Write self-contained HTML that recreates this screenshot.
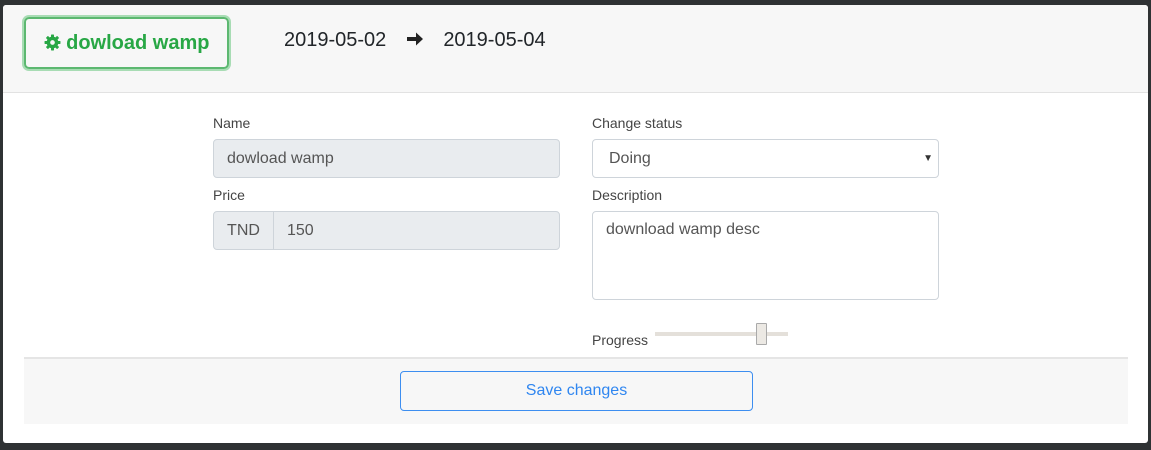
<!DOCTYPE html>
<html><head><meta charset="utf-8"><style>
body{margin:0;width:1151px;height:450px;background:#2f3234;position:relative;overflow:hidden;font-family:"Liberation Sans",sans-serif;}
.card{position:absolute;left:3px;top:5px;width:1145px;height:438px;background:#fff;border-radius:3px;overflow:hidden}
.hdr{position:absolute;left:0;top:0;width:1145px;height:87px;background:#f7f7f7;border-bottom:1px solid #e2e2e2}
.tbtn{position:absolute;left:21px;top:12px;width:201px;height:48px;border:2px solid #5cb870;border-radius:5px;box-shadow:0 0 0 2px #a8dcb4;background:transparent;color:#28a745;font-weight:bold;font-size:20px;line-height:48px;text-align:center}
.dates{position:absolute;left:281px;top:24px;font-size:20px;color:#212529}
.ab{position:absolute;font-size:14px;color:#444}
.inp{position:absolute;box-sizing:border-box;border:1px solid #ced4da;border-radius:4px;font-size:16px;color:#555;padding-left:13px}
.foot{position:absolute;left:21px;top:352px;width:1104px;height:65px;background:#f7f7f7;border-top:2px solid #e5e5e5}
.save{position:absolute;left:376px;top:12px;width:351px;height:38px;border:1px solid #3d8ef0;border-radius:4px;color:#2f86f0;font-size:16px;text-align:center;line-height:38px;background:#f7f7f7}
</style></head><body>
<div class="card">
 <div class="hdr">
  <div class="tbtn"><svg width="17" height="17" viewBox="0 0 16 16" style="vertical-align:-2px"><g fill="#28a745"><circle cx="8" cy="8" r="5.5"/><rect x="6.6" y="0.5" width="2.8" height="15" rx="0.6"/><rect x="6.6" y="0.5" width="2.8" height="15" rx="0.6" transform="rotate(45 8 8)"/><rect x="6.6" y="0.5" width="2.8" height="15" rx="0.6" transform="rotate(90 8 8)"/><rect x="6.6" y="0.5" width="2.8" height="15" rx="0.6" transform="rotate(135 8 8)"/></g><circle cx="8" cy="8" r="2.2" fill="#f7f7f7"/></svg> dowload wamp</div>
  <div class="dates">2019-05-02<svg width="18" height="16" viewBox="0 0 18 16" style="vertical-align:-1px;margin:0 19px 0 20px"><path d="M1 6h9V1.5L17 8l-7 6.5V10H1z" fill="#222"/></svg>2019-05-04</div>
 </div>
 <div class="ab" style="left:210px;top:110px">Name</div>
 <div class="inp" style="left:210px;top:134px;width:347px;height:39px;background:#e9ecef;line-height:37px">dowload wamp</div>
 <div class="ab" style="left:210px;top:182px">Price</div>
 <div class="inp" style="left:210px;top:206px;width:347px;height:39px;background:#e9ecef;line-height:37px;padding-left:0">
  <span style="display:inline-block;width:59px;text-align:center;border-right:1px solid #ced4da">TND</span><span style="padding-left:13px">150</span></div>
 <div class="ab" style="left:589px;top:110px">Change status</div>
 <div class="inp" style="left:589px;top:134px;width:347px;height:39px;background:#fff;line-height:37px;padding-left:16px">Doing<span style="position:absolute;right:5px;font-size:10px;color:#333">▼</span></div>
 <div class="ab" style="left:589px;top:182px">Description</div>
 <div class="inp" style="left:589px;top:206px;width:347px;height:89px;background:#fff;padding-top:9px">download wamp desc</div>
 <div class="ab" style="left:589px;top:327px">Progress</div>
 <div style="position:absolute;left:652px;top:327px;width:133px;height:4px;background:#e4e0da"></div>
 <div style="position:absolute;left:753px;top:318px;width:9px;height:20px;background:#ece9e4;border:1px solid #aaa;border-radius:1px"></div>
 <div class="foot"><div class="save">Save changes</div></div>
</div>
</body></html>
